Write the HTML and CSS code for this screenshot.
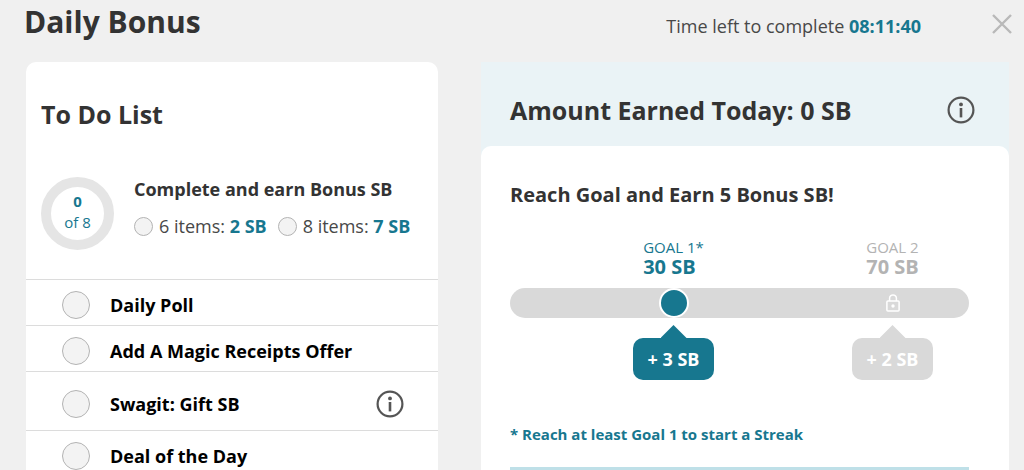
FILE: index.html
```html
<!DOCTYPE html>
<html lang="en">
<head>
  <meta charset="UTF-8" />
  <meta name="viewport" content="width=device-width, initial-scale=1.0"/>
  <title>Daily Bonus</title>
  <link rel="stylesheet" href="styles.css">
</head>
<body>
  <header class="topBar">
    <h1>Daily Bonus</h1>
    <p class="timer">Time left to complete <strong>08:11:40</strong></p>
    <button class="iconBtn" type="button" aria-label="Close">
      <svg width="20" height="20" viewBox="0 0 20 20"><path d="M1 1L19 19M19 1L1 19" stroke="#b9b9b9" stroke-width="2.4" fill="none"/></svg>
    </button>
  </header>

  <main class="columns">
    <section class="card">
      <h2>To Do List</h2>
      <div class="summary">
        <div class="ring"><strong>0</strong><span>of 8</span></div>
        <div class="rewards">
          <h4>Complete and earn Bonus SB</h4>
          <div class="rewardList">
            <label><input class="dot small" type="checkbox"><span>6 items: <strong>2 SB</strong></span></label>
            <label><input class="dot small" type="checkbox"><span>8 items: <strong>7 SB</strong></span></label>
          </div>
        </div>
      </div>
      <ul class="todo">
        <li><label><input class="dot" type="checkbox">Daily Poll</label></li>
        <li><label><input class="dot" type="checkbox">Add A Magic Receipts Offer</label></li>
        <li class="tall">
          <label><input class="dot" type="checkbox">Swagit: Gift SB</label>
          <button class="iconBtn" type="button" aria-label="About Swagit">
            <svg width="28" height="28" viewBox="0 0 28 28"><circle cx="14" cy="14" r="12.4" fill="none" stroke="#555" stroke-width="2.2"/><circle cx="14" cy="8.4" r="1.9" fill="#555"/><path d="M14 12V21.4" stroke="#555" stroke-width="2.6"/></svg>
          </button>
        </li>
        <li><label><input class="dot" type="checkbox">Deal of the Day</label></li>
      </ul>
    </section>

    <section class="earned">
      <div class="earnedHead">
        <h2>Amount Earned Today: 0 SB</h2>
        <button class="iconBtn" type="button" aria-label="About amount earned">
          <svg width="28" height="28" viewBox="0 0 28 28"><circle cx="14" cy="14" r="12.4" fill="none" stroke="#555" stroke-width="2.2"/><circle cx="14" cy="8.4" r="1.9" fill="#555"/><path d="M14 12V21.4" stroke="#555" stroke-width="2.6"/></svg>
        </button>
      </div>
      <div class="earnedBody">
        <h3>Reach Goal and Earn 5 Bonus SB!</h3>
        <div class="goals">
          <div class="goal first">GOAL 1*<strong>30 SB</strong></div>
          <div class="goal second">GOAL 2<strong>70 SB</strong></div>
          <div class="track"></div>
          <div class="knob first"></div>
          <svg class="lock second" width="14" height="18" viewBox="0 0 14 18"><rect x="0.9" y="6.9" width="12.2" height="10.2" rx="1" fill="none" stroke="#fff" stroke-width="1.5"/><path d="M3.6 6.9V4.3a3.4 3.4 0 0 1 6.8 0V6.9" fill="none" stroke="#fff" stroke-width="1.5"/><circle cx="7" cy="12" r="1.7" fill="#fff"/></svg>
          <div class="bubble first">+ 3 SB</div>
          <div class="bubble second">+ 2 SB</div>
        </div>
        <p class="note">* Reach at least Goal 1 to start a Streak</p>
      </div>
    </section>
  </main>
</body>
</html>
```
FILE: styles.css
```css
* {
    box-sizing: border-box;
}

body {
    margin: 0;
    height: 100vh;
    overflow: hidden;
    background-color: #f0f0f0;
    color: #333;
    font-family: "Open Sans", "Noto Sans", sans-serif;
    font-size: 18px;
    line-height: 24px;
}

h1, h2, h3, h4, p, ul {
    margin: 0;
    padding: 0;
}

h1 {
    flex: 1;
    font-size: 30px;
    line-height: 44px;
}

h2 {
    font-size: 25px;
    line-height: 34px;
}

h3 {
    font-size: 20px;
    line-height: 28px;
}

h4 {
    font-size: 18px;
}

.topBar {
    display: flex;
    align-items: flex-start;
    height: 62px;
    padding: 0 12px 0 24px;
}

.timer {
    margin-right: 71px;
    padding-top: 14px;
    color: #484848;
}

.timer strong, .rewards strong {
    color: #17778f;
}

.iconBtn {
    display: flex;
    padding: 0;
    border: none;
    background: none;
    cursor: pointer;
}

.topBar .iconBtn {
    padding-top: 14px;
}

.columns {
    display: grid;
    grid-template-columns: 412fr 528fr;
    gap: 43px;
    padding: 0 15px 0 26px;
}

.card {
    background-color: white;
    border-radius: 10px 10px 0 0;
    padding-top: 35px;
}

.card h2 {
    padding-left: 15px;
}

.summary {
    display: flex;
    align-items: flex-start;
    gap: 20px;
    padding: 46px 15px 29px;
}

.ring {
    display: flex;
    flex-direction: column;
    align-items: center;
    justify-content: center;
    flex: none;
    width: 73px;
    height: 73px;
    border: 10px solid #e5e5e5;
    border-radius: 50%;
    color: #17778f;
    font-size: 15px;
    line-height: 21px;
    padding-bottom: 4px;
}

.rewardList {
    display: flex;
    gap: 11px;
    margin-top: 13px;
    color: #484848;
    white-space: nowrap;
}

.rewardList label {
    display: flex;
    align-items: center;
    gap: 6px;
}

.dot {
    appearance: none;
    flex: none;
    width: 28px;
    height: 28px;
    margin: 0;
    border: 1px solid #b3b3b3;
    border-radius: 50%;
    background-color: #f3f3f3;
}

.dot:checked {
    background-color: #17778f;
}

.dot.small {
    width: 19px;
    height: 19px;
}

.todo {
    list-style: none;
    color: black;
    font-weight: bold;
}

.todo li {
    display: flex;
    align-items: center;
    justify-content: space-between;
    height: 46px;
    padding: 5px 34px 0 36px;
    border-top: 1px solid #dcdcdc;
}

.todo li.tall {
    height: 59px;
}

.todo label {
    display: flex;
    align-items: center;
    gap: 20px;
}

.earned {
    background-color: #eaf3f6;
}

.earnedHead {
    display: flex;
    align-items: center;
    justify-content: space-between;
    height: 84px;
    padding: 12px 34px 0 29px;
}

.earnedBody {
    background-color: white;
    border-radius: 10px;
    padding: 35px 40px 20px 29px;
}

/* one row for labels, one for the bar, one for bubbles */
.goals {
    display: grid;
    grid-template-columns: 123fr 81px 138fr 81px 36fr;
    grid-template-rows: auto 30px auto;
    justify-items: center;
    align-items: center;
    margin-top: 28px;
}

.goal {
    grid-row: 1;
    padding-bottom: 11px;
    color: #17778f;
    font-size: 15px;
    line-height: 20px;
}

.goal strong {
    display: block;
    font-size: 20px;
}

.goal.second {
    color: #b3b3b3;
}

.first {
    grid-column: 2;
}

.second {
    grid-column: 4;
}

.track {
    grid-column: 1 / -1;
    grid-row: 2;
    justify-self: stretch;
    height: 30px;
    border-radius: 15px;
    background-color: #d9d9d9;
}

.knob {
    grid-row: 2;
    width: 30px;
    height: 30px;
    border: 2px solid white;
    border-radius: 50%;
    background-color: #17778f;
}

.lock {
    grid-row: 2;
}

.bubble {
    grid-row: 3;
    width: 81px;
    margin-top: 20px;
    border-radius: 10px;
    background-color: #17778f;
    color: white;
    font-weight: bold;
    line-height: 42px;
    text-align: center;
}

.bubble::before {
    content: "";
    display: block;
    width: 26px;
    height: 13px;
    margin: -13px auto 0;
    background-color: inherit;
    clip-path: polygon(50% 0, 100% 100%, 0 100%);
}

.bubble.second {
    background-color: #d9d9d9;
}

.note {
    margin-top: 42px;
    padding-bottom: 21px;
    border-bottom: 3px solid #bfe0e8;
    color: #17778f;
    font-size: 15px;
    font-weight: bold;
}
```
